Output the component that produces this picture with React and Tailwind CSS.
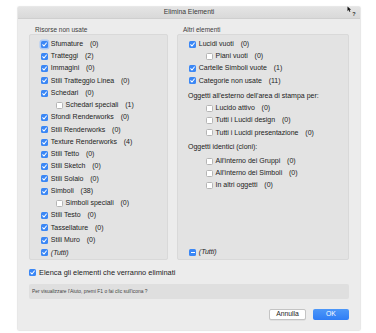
import React from "react";

const Cb = ({ s, focus }) => {
  if (s === "on" || s === "mix") {
    return (
      <span
        className={
          "flex h-[7px] w-[7px] shrink-0 items-center justify-center rounded-[1.5px] bg-[#3b87f5] " +
          (focus ? "ring-[1.5px] ring-[#a9c9f7]" : "")
        }
      >
        {s === "on" ? (
          <svg width="7" height="7" viewBox="0 0 10 10">
            <path d="M2.4 5.3 L4.3 7.2 L7.7 2.8" fill="none" stroke="white" strokeWidth="1.5" strokeLinecap="round" strokeLinejoin="round" />
          </svg>
        ) : (
          <span className="h-[1.2px] w-[4px] bg-white" />
        )}
      </span>
    );
  }
  return <span className="h-[7px] w-[7px] shrink-0 rounded-[1.5px] border-[0.75px] border-[#b5b5b5] bg-white" />;
};

const Row = ({ s, label, count, nested, focus, italic, right, className = "" }) => (
  <div
    className={
      "flex h-[12.25px] items-center " +
      (nested ? (right ? "pl-[27.7px]" : "pl-[25.7px]") : "pl-[11px]") +
      " " +
      className
    }
  >
    <Cb s={s} focus={focus} />
    <span className={"ml-[2.8px] whitespace-nowrap " + (italic ? "italic" : "")}>{label}</span>
    {count && <span className="ml-[6.8px] whitespace-nowrap">{count}</span>}
  </div>
);

const Heading = ({ children, className = "" }) => (
  <div className={"flex h-[12.25px] items-center pl-[10px] font-medium text-[#1a1a1a] " + className}>{children}</div>
);

export default function App() {
  const left = [
    ["on", "Sfumature", "(0)", false, true],
    ["on", "Tratteggi", "(2)"],
    ["on", "Immagini", "(0)"],
    ["on", "Stili Tratteggio Linea", "(0)"],
    ["on", "Schedari", "(0)"],
    ["off", "Schedari speciali", "(1)", true],
    ["on", "Sfondi Renderworks", "(0)"],
    ["on", "Stili Renderworks", "(0)"],
    ["on", "Texture Renderworks", "(4)"],
    ["on", "Stili Tetto", "(0)"],
    ["on", "Stili Sketch", "(0)"],
    ["on", "Stili Solaio", "(0)"],
    ["on", "Simboli", "(38)"],
    ["off", "Simboli speciali", "(0)", true],
    ["on", "Stili Testo", "(0)"],
    ["on", "Tassellature", "(0)"],
    ["on", "Stili Muro", "(0)"],
  ];

  return (
    <div
      className="h-[333px] w-[376px] overflow-hidden bg-white pl-[18px] pt-[7px] text-[7px] text-[#222]"
      style={{ fontFamily: '"Liberation Sans", Arial, sans-serif' }}
    >
      <div className="relative flex h-[323px] w-[342px] flex-col bg-[#ececec] shadow-[0_0_1.5px_rgba(0,0,0,0.35)]">
        {/* title bar */}
        <div className="flex h-[12px] shrink-0 items-center justify-center border-b border-[#cfcfcf] bg-gradient-to-b from-[#e4e4e4] to-[#d9d9d9] text-[6.8px] text-[#3a3a3a]">
          Elimina Elementi
        </div>
        <svg className="absolute right-[3px] top-[-1.5px]" width="10" height="10" viewBox="0 0 10 10">
          <path d="M0.5 0.5 L0.5 5.2 L1.7 4.1 L2.6 6 L3.4 5.6 L2.5 3.8 L4.1 3.8 Z" fill="#111" />
          <text x="5.3" y="9.6" fontSize="5.5" fontWeight="bold" fill="#333" fontFamily="Liberation Sans, Arial, sans-serif">?</text>
        </svg>

        <div className="flex flex-1 flex-col px-[11px]">
          {/* labels */}
          <div className="mt-[7px] flex h-[8px] items-center text-[6.5px] text-[#3c3c3c]">
            <div className="w-[148px] pl-[6px]">Risorse non usate</div>
            <div className="pl-[6px]">Altri elementi</div>
          </div>

          {/* panels */}
          <div className="flex h-[226px] gap-[9px]">
            <div className="flex w-[139px] flex-col rounded-[2px] border border-[#d9d9d9] bg-[#e3e3e3] pt-[3px]">
              {left.map(([s, l, c, n, f]) => (
                <Row key={l} s={s} label={l} count={c} nested={n} focus={f} />
              ))}
              <Row s="on" label="(Tutti)" italic className="mt-auto" />
            </div>
            <div className="flex flex-1 flex-col rounded-[2px] border border-[#d9d9d9] bg-[#e3e3e3] pt-[3px]">
              <Row s="on" label="Lucidi vuoti" count="(0)" right />
              <Row s="off" label="Piani vuoti" count="(0)" nested right />
              <Row s="on" label="Cartelle Simboli vuote" count="(1)" right />
              <Row s="on" label="Categorie non usate" count="(11)" right />
              <Heading className="mt-[3px]">Oggetti all'esterno dell'area di stampa per:</Heading>
              <Row s="off" label="Lucido attivo" count="(0)" nested right />
              <Row s="off" label="Tutti i Lucidi design" count="(0)" nested right />
              <Row s="off" label="Tutti i Lucidi presentazione" count="(0)" nested right />
              <Heading className="mt-[2px]">Oggetti identici (cloni):</Heading>
              <Row s="off" label="All'interno dei Gruppi" count="(0)" nested right className="mt-[1.75px]" />
              <Row s="off" label="All'interno dei Simboli" count="(0)" nested right />
              <Row s="off" label="In altri oggetti" count="(0)" nested right />
              <Row s="mix" label="(Tutti)" italic right className="mt-auto pb-[1px]" />
            </div>
          </div>

          {/* Elenca */}
          <div className="mt-[8px] flex h-[9px] items-center text-[7.4px]">
            <Cb s="on" />
            <span className="ml-[3px]">Elenca gli elementi che verranno eliminati</span>
          </div>

          {/* help box */}
          <div className="mt-[7px] flex h-[15px] items-center rounded-[2px] bg-[#dfdfdf] pl-[3px] text-[4.9px] text-[#444]">
            Per visualizzare l'Aiuto, premi F1 o fai clic sull'icona ?
          </div>

          {/* buttons */}
          <div className="mt-[10px] flex justify-end gap-[7px]">
            <div className="flex h-[10.5px] w-[37px] items-center justify-center rounded-[2px] border-[0.75px] border-[#c4c4c4] bg-white text-[6.8px] text-[#222] shadow-[0_0.5px_0.5px_rgba(0,0,0,0.1)]">
              Annulla
            </div>
            <div className="flex h-[10.5px] w-[36px] items-center justify-center rounded-[2px] bg-gradient-to-b from-[#4d97f8] to-[#2f7df5] text-[6.8px] text-white">
              OK
            </div>
          </div>
        </div>
      </div>
    </div>
  );
}
